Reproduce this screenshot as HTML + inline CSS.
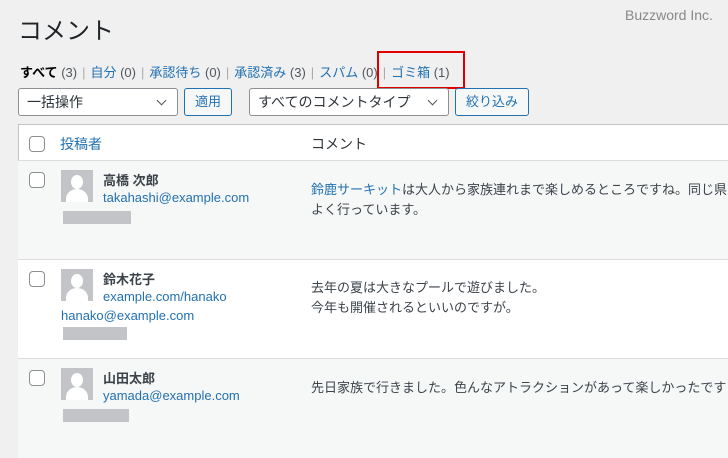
<!DOCTYPE html>
<html><head><meta charset="utf-8"><style>
body{margin:0;width:728px;height:450px;background:#f0f0f1;font-family:"Liberation Sans","Noto Sans CJK JP",sans-serif;font-size:13px;color:#3c434a;position:relative;overflow:hidden}
.a{position:absolute;white-space:nowrap}
a,.l{color:#2271b1;text-decoration:none}
.p{margin:0 5px;color:#a7aaad}
.sel{position:absolute;height:28px;border:1px solid #8c8f94;border-radius:3px;background:#fff;box-sizing:border-box;font-size:14px;line-height:26px;padding-left:8px;color:#2c3338}
.sel:after{content:"";position:absolute;right:12px;top:8px;width:6px;height:6px;border-right:1.5px solid #50575e;border-bottom:1.5px solid #50575e;transform:rotate(45deg)}
.btn{position:absolute;height:28px;border:1px solid #2271b1;border-radius:3px;background:#f6f7f7;box-sizing:border-box;font-size:13px;line-height:26px;text-align:center;color:#2271b1}
.cb{position:absolute;width:14px;height:14px;border:1px solid #8c8f94;border-radius:4px;background:#fff}
.av{position:absolute;width:32px;height:32px;background:#c3c4c7;overflow:hidden}
.av:before{content:"";position:absolute;left:10px;top:5px;width:12px;height:14px;border-radius:50%;background:#fff}
.av:after{content:"";position:absolute;left:5px;top:19px;width:22px;height:20px;border-radius:50% 50% 0 0;background:#fff}
.gr{position:absolute;background:#c3c4c7;height:13px}
.row{position:absolute;left:18px;width:720px;border-top:1px solid #dcdcde}
</style></head><body>
<div class="a" style="left:18px;top:11px;font-size:24px;color:#1d2327">コメント</div>
<div class="a" style="left:625px;top:7px;font-size:14px;color:#888">Buzzword Inc.</div>
<div class="a" style="left:20px;top:62px;color:#50575e"><b style="color:#000">すべて</b> (3)<span class="p">|</span><span class="l">自分</span> (0)<span class="p">|</span><span class="l">承認待ち</span> (0)<span class="p">|</span><span class="l">承認済み</span> (3)<span class="p">|</span><span class="l">スパム</span> (0)<span class="p">|</span><span class="l">ゴミ箱</span> (1)</div>
<div class="a" style="left:377px;top:51px;width:84px;height:34px;border:2px solid #e00000"></div>
<div class="sel" style="left:18px;top:88px;width:160px">一括操作</div>
<div class="btn" style="left:184px;top:88px;width:48px">適用</div>
<div class="sel" style="left:249px;top:88px;width:200px">すべてのコメントタイプ</div>
<div class="btn" style="left:455px;top:88px;width:74px">絞り込み</div>
<div class="a" style="left:18px;top:124px;width:720px;height:330px;background:#fff;border-top:1px solid #c3c4c7;border-left:1px solid #c3c4c7"></div>
<div class="cb" style="left:29px;top:136px"></div>
<div class="a" style="left:60px;top:134px;font-size:14px" ><span class="l">投稿者</span></div>
<div class="a" style="left:311px;top:134px;font-size:14px;color:#2c3338">コメント</div>
<div class="row" style="top:160px;height:99px;background:#f6f7f7"></div>
<div class="row" style="top:259px;height:99px;background:#fff"></div>
<div class="row" style="top:358px;height:99px;background:#f6f7f7"></div>
<div class="cb" style="left:29px;top:172px"></div>
<div class="av" style="left:61px;top:170px"></div>
<div class="a" style="left:103px;top:170px;font-weight:bold">高橋 次郎</div>
<div class="a l" style="left:103px;top:190px">takahashi@example.com</div>
<div class="gr" style="left:63px;top:211px;width:68px"></div>
<div class="a" style="left:311px;top:180px;line-height:20px"><span class="l">鈴鹿サーキット</span>は大人から家族連れまで楽しめるところですね。同じ県<br>よく行っています。</div>
<div class="cb" style="left:29px;top:271px"></div>
<div class="av" style="left:61px;top:269px"></div>
<div class="a" style="left:103px;top:269px;font-weight:bold">鈴木花子</div>
<div class="a l" style="left:103px;top:289px">example.com/hanako</div>
<div class="a l" style="left:61px;top:308px">hanako@example.com</div>
<div class="gr" style="left:63px;top:327px;width:64px"></div>
<div class="a" style="left:311px;top:278px;line-height:20px">去年の夏は大きなプールで遊びました。<br>今年も開催されるといいのですが。</div>
<div class="cb" style="left:29px;top:370px"></div>
<div class="av" style="left:61px;top:368px"></div>
<div class="a" style="left:103px;top:368px;font-weight:bold">山田太郎</div>
<div class="a l" style="left:103px;top:388px">yamada@example.com</div>
<div class="gr" style="left:63px;top:409px;width:66px"></div>
<div class="a" style="left:311px;top:377px">先日家族で行きました。色んなアトラクションがあって楽しかったです</div>
</body></html>
